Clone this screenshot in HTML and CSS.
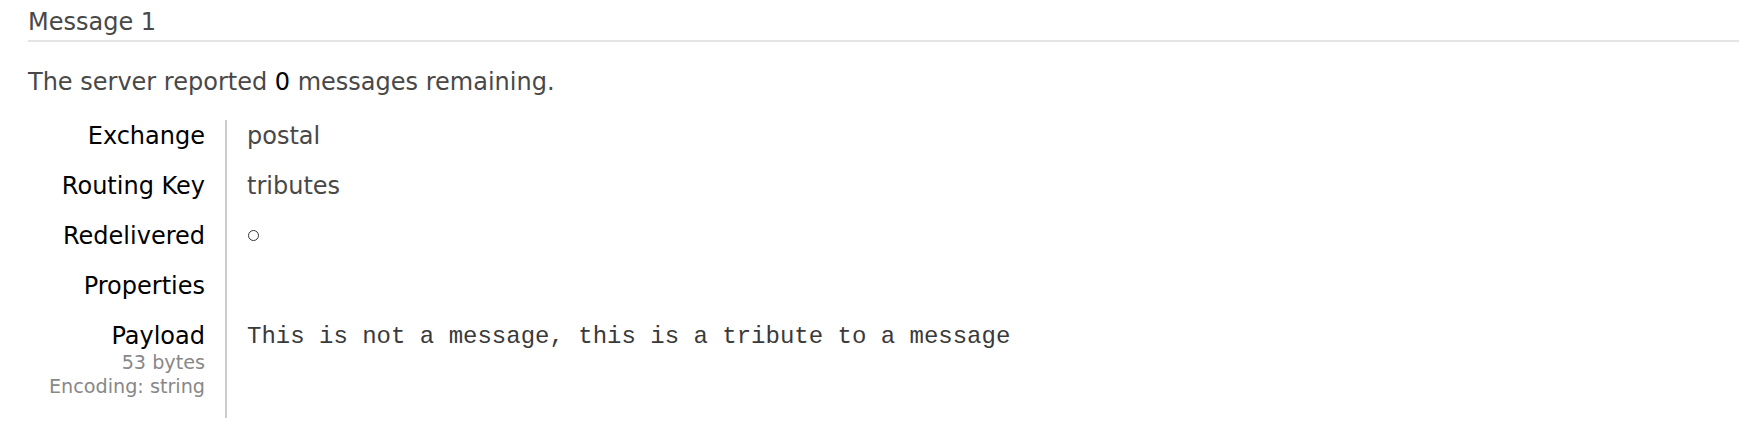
FILE: index.html
```html
<!DOCTYPE html>
<html>
<head>
<meta charset="utf-8">
<link rel="stylesheet" href="styles.css">
</head>
<body>
<div class="page">
  <h3 class="msg-title">Message 1</h3>
  <p class="remaining">The server reported <b>0</b> messages remaining.</p>
  <table class="facts">
    <tr>
      <th>Exchange</th>
      <td>postal</td>
    </tr>
    <tr>
      <th>Routing Key</th>
      <td>tributes</td>
    </tr>
    <tr>
      <th>Redelivered</th>
      <td><span class="circle"></span></td>
    </tr>
    <tr>
      <th>Properties</th>
      <td></td>
    </tr>
    <tr class="last">
      <th>Payload
        <span class="sub">53 bytes</span>
        <span class="sub">Encoding: string</span>
      </th>
      <td><pre class="payload">This is not a message, this is a tribute to a message</pre></td>
    </tr>
  </table>
</div>
</body>
</html>
```

FILE: styles.css
```css
html, body {
  margin: 0;
  padding: 0;
  background: #ffffff;
}

body {
  font-family: "DejaVu Sans", Verdana, sans-serif;
  font-size: 24px;
  line-height: 30px;
  color: #484848;
}

.page {
  padding: 7px 21px 0 28px;
}

.msg-title {
  margin: 0;
  padding: 0 0 3px 0;
  font-size: 24px;
  font-weight: normal;
  line-height: 30px;
  color: #484848;
  border-bottom: 2px solid #e4e4e4;
}

.remaining {
  margin: 25px 0 0 0;
}

.remaining b {
  font-weight: normal;
  color: #000000;
}

.facts {
  margin: 23px 0 0 20px;
  border-collapse: collapse;
  border-spacing: 0;
}

.facts th {
  width: 157px;
  padding: 1px 20px 19px 0;
  text-align: right;
  vertical-align: top;
  font-weight: normal;
  color: #000000;
  white-space: nowrap;
  border-right: 2px solid #cccccc;
}

.facts td {
  padding: 1px 0 19px 20px;
  vertical-align: top;
  color: #484848;
  white-space: nowrap;
}

.sub {
  display: block;
  font-size: 19.2px;
  line-height: 24px;
  color: #888888;
}

.circle {
  display: inline-block;
  width: 9px;
  height: 9px;
  border: 1px solid #333333;
  border-radius: 50%;
  margin: 0 0 3px 1px;
}

.payload {
  margin: 0;
  padding-top: 2px;
  font-family: "Liberation Mono", "Courier New", monospace;
  font-size: 24px;
  line-height: 28px;
  color: #3a3a3a;
}
```
